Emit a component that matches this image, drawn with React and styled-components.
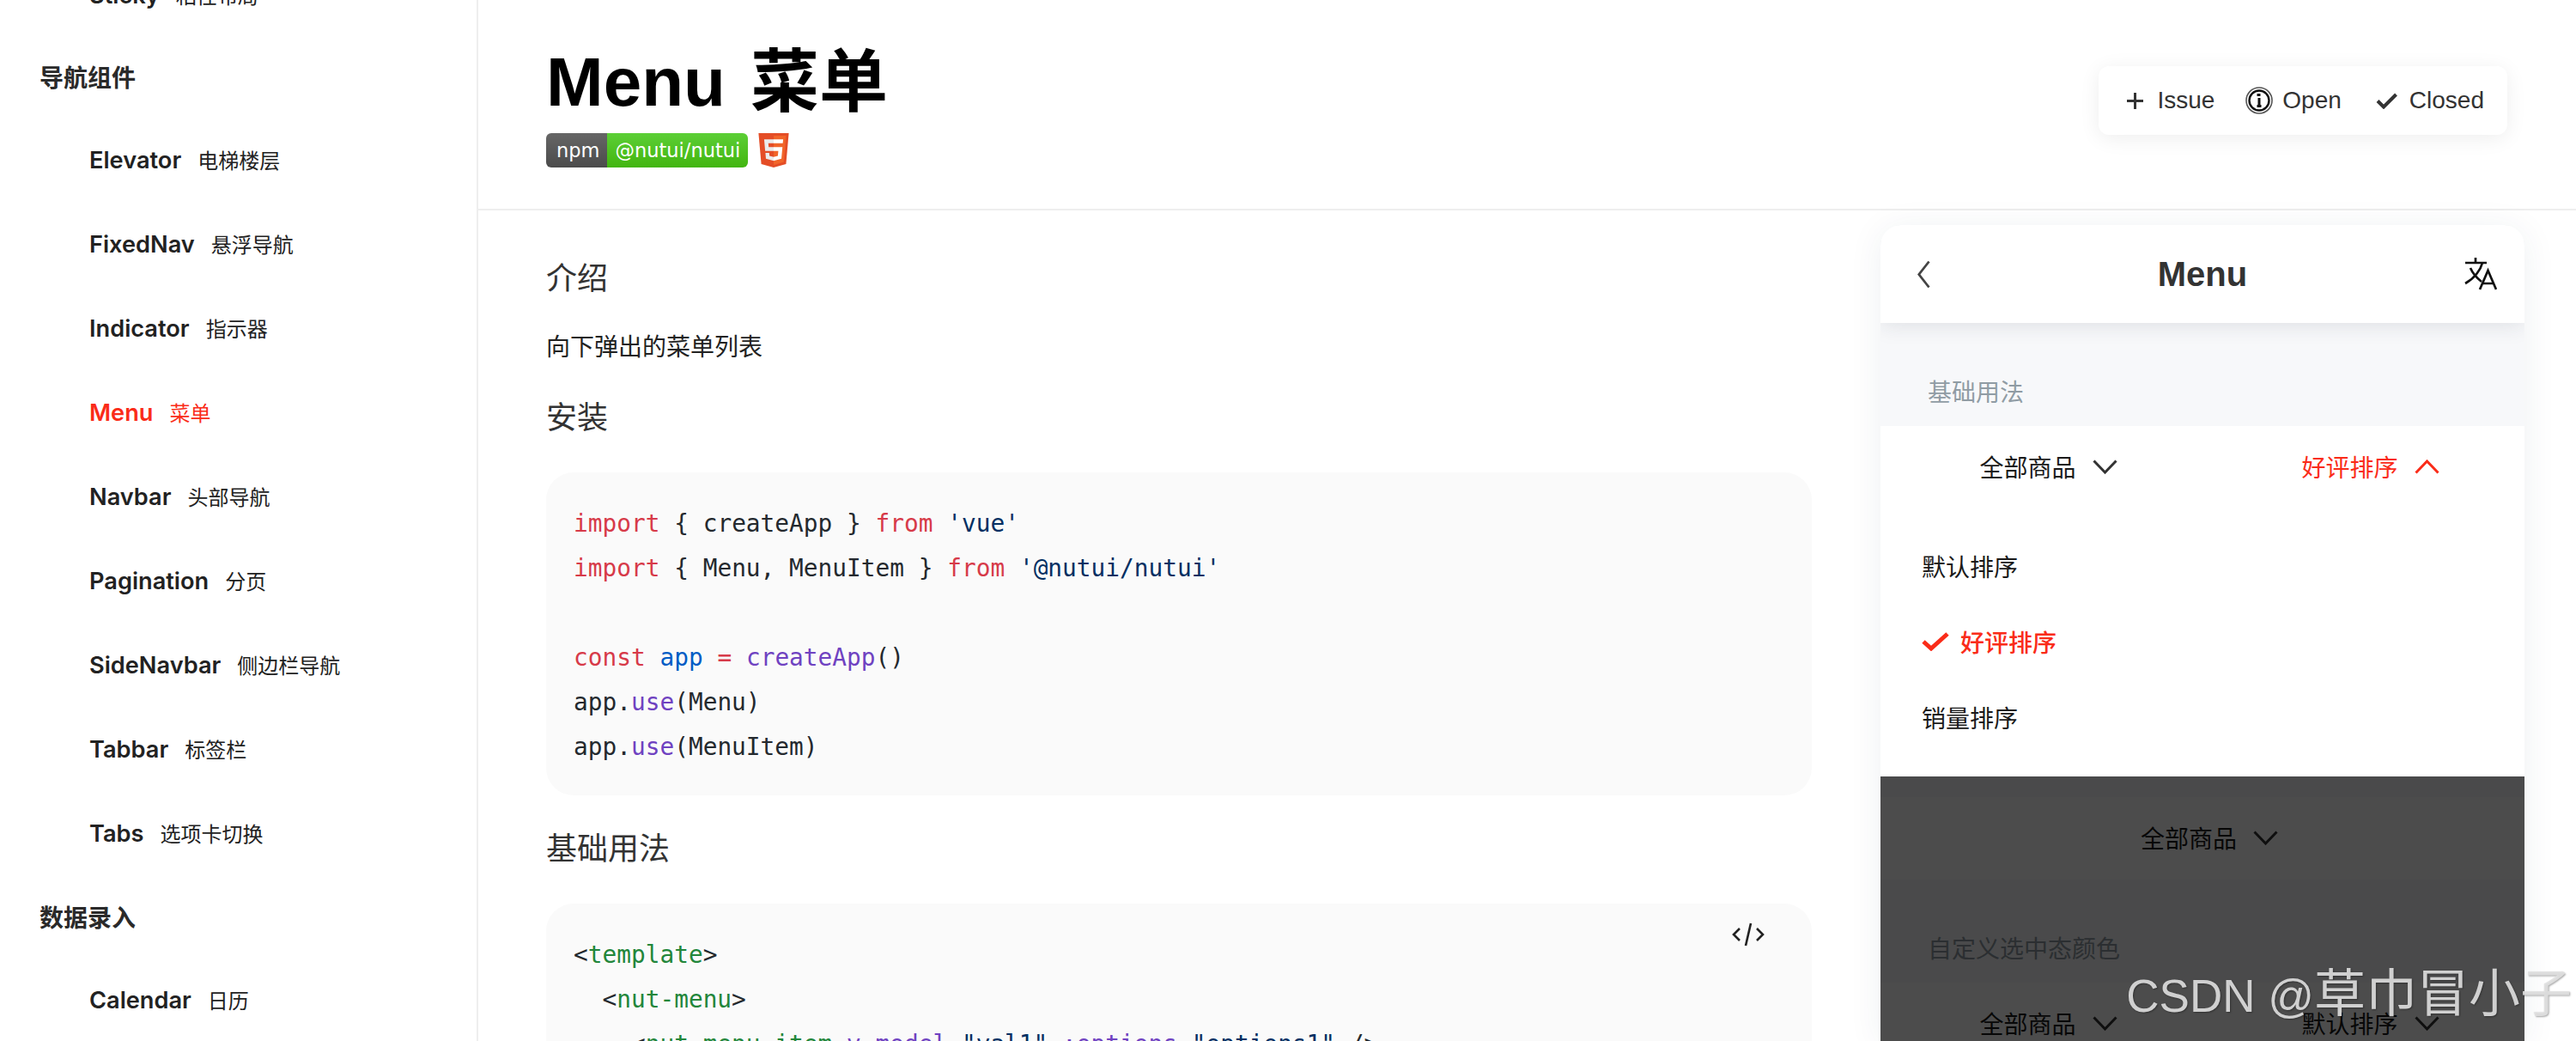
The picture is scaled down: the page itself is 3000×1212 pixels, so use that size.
import React from 'react';
import styled, { createGlobalStyle } from 'styled-components';

const cjk = '"Noto Sans CJK SC"';

const GlobalStyle = createGlobalStyle`
  html, body {
    margin: 0;
    padding: 0;
    height: 100%;
    overflow: hidden;
    background: #fff;
    font-family: "Liberation Sans", ${cjk}, sans-serif;
  }
`;

const Page = styled.div`
  position: relative;
  display: flex;
  width: 3000px;
  height: 1212px;
  overflow: hidden;
`;

// Sidebar
const Sidebar = styled.nav`
  flex: 0 0 555px;
  height: 100%;
  overflow: hidden;
  border-right: 2px solid #eee;
`;

const NavList = styled.div`
  display: flex;
  flex-direction: column;
  margin-top: -55px;
`;

const NavGroup = styled.div`
  flex-shrink: 0;
  height: ${props => (props.$tight ? 94 : 96)}px;
  line-height: ${props => (props.$tight ? 98 : 102)}px;
  padding-left: 46px;
  font-size: 28px;
  font-weight: 700;
  color: #2a2a2a;
`;

const NavItem = styled.div`
  flex-shrink: 0;
  display: flex;
  align-items: baseline;
  gap: 19px;
  height: 98px;
  line-height: 100px;
  padding-left: 104px;
  color: ${props => (props.$active ? '#fa2c19' : '#222')};
`;

const NavName = styled.span`
  font-family: Inter, ${cjk}, sans-serif;
  font-size: 27.2px;
  font-weight: 600;
`;

const NavCn = styled.span`
  font-size: 24px;
`;

// Main column
const Main = styled.main`
  flex: 1;
  min-width: 0;
  display: flex;
  flex-direction: column;
`;

const DocHeader = styled.header`
  flex: 0 0 243px;
  display: flex;
  justify-content: space-between;
  align-items: flex-start;
  padding: 0 80px 0 79px;
  border-bottom: 2px solid #eee;
`;

const TitleBlock = styled.div`
  display: flex;
  flex-direction: column;
  padding-top: 49px;
`;

const Title = styled.h1`
  margin: 0;
  font-size: 80px;
  line-height: 94px;
  font-weight: 700;
  word-spacing: 7px;
  color: #000;
`;

const Badges = styled.div`
  display: flex;
  align-items: center;
  gap: 12px;
  margin-top: 12px;
`;

const NpmBadge = styled.div`
  display: flex;
  height: 40px;
  border-radius: 6px;
  overflow: hidden;
  font-family: "DejaVu Sans", sans-serif;
  font-size: 22.5px;
  line-height: 40px;
  color: #fff;
`;

const BadgeLabel = styled.span`
  padding: 0 9px 0 12px;
  background: linear-gradient(#666, #4b4b4b);
`;

const BadgeValue = styled.span`
  padding: 0 9px;
  background: linear-gradient(#5ccf36, #42b50f);
`;

const IssueCard = styled.div`
  display: flex;
  align-items: center;
  margin-top: 77px;
  height: 80px;
  padding: 0 27px 0 33px;
  background: #fff;
  border-radius: 12px;
  box-shadow: 0 4px 24px rgba(0, 0, 0, 0.07);
  font-size: 28px;
  color: #333;
`;

const IssueItem = styled.div`
  display: flex;
  align-items: center;
  gap: ${props => props.$gap}px;
  margin-right: ${props => props.$after || 0}px;
`;

const Body = styled.div`
  flex: 1;
  min-height: 0;
  display: flex;
  gap: 80px;
  padding-left: 79px;
`;

const Article = styled.article`
  flex: 0 0 1474px;
  display: flex;
  flex-direction: column;
`;

const Heading = styled.h2`
  flex-shrink: 0;
  margin: ${props => props.$top}px 0 0;
  font-size: 36px;
  line-height: 50px;
  font-weight: 400;
  color: #333;
`;

const Paragraph = styled.p`
  flex-shrink: 0;
  margin: 35px 0 0;
  font-size: 28px;
  line-height: 40px;
  color: #222;
`;

const CodeBlock = styled.pre`
  position: relative;
  flex-shrink: 0;
  margin: ${props => props.$top}px 0 0;
  padding: 34px 32px 30px;
  border-radius: 32px;
  background: #fafafa;
  font-family: "DejaVu Sans Mono", monospace;
  font-size: 27.8px;
  line-height: 52px;
  color: #24292e;
  white-space: pre;
`;

const CodeLine = styled.div`
  height: 52px;
`;

const Kw = styled.span`color: #d73a49;`;
const Str = styled.span`color: #032f62;`;
const Var = styled.span`color: #005cc5;`;
const Fn = styled.span`color: #6f42c1;`;
const Tag = styled.span`color: #22863a;`;

const CodeToggle = styled.svg`
  position: absolute;
  top: 22px;
  right: 55px;
`;

// Phone preview
const Phone = styled.aside`
  flex: 0 0 750px;
  margin-top: 17px;
  display: flex;
  flex-direction: column;
  background: #f7f8fa;
  border-radius: 24px 24px 0 0;
  box-shadow: 0 4px 40px rgba(30, 50, 90, 0.07);
  overflow: hidden;

  > * {
    flex-shrink: 0;
  }
`;

const PhoneBar = styled.div`
  position: relative;
  z-index: 1;
  height: 114px;
  display: grid;
  grid-template-columns: 1fr auto 1fr;
  align-items: center;
  padding: 0 32px;
  background: #fff;
  box-shadow: 0 2px 24px rgba(30, 40, 60, 0.12);

  > svg:first-child {
    margin-left: 11px;
  }

  > svg:last-child {
    justify-self: end;
  }
`;

const PhoneTitle = styled.div`
  font-size: 40px;
  font-weight: 700;
  color: #333;
`;

const SectionTitle = styled.div`
  height: 120px;
  padding: 62px 0 0 55px;
  box-sizing: border-box;
  font-size: 28px;
  line-height: 40px;
  color: #909ca4;
`;

const MenuBar = styled.div`
  display: flex;
  height: 96px;
  background: #fff;
`;

const MenuToggle = styled.div`
  flex: 1;
  display: flex;
  align-items: center;
  justify-content: center;
  gap: 19px;
  padding: 0 0 2px 16px;
  font-size: 28px;
  color: ${props => (props.$active ? '#fa2c19' : '#1a1a1a')};
`;

const Popup = styled.div`
  display: flex;
  flex-direction: column;
  padding: 23px 0 25px;
  background: #fff;
`;

const PopupItem = styled.div`
  display: flex;
  align-items: center;
  gap: 13px;
  height: 88px;
  padding-left: 48px;
  font-size: 28px;
  color: ${props => (props.$active ? '#fa2c19' : '#1a1a1a')};
  font-weight: ${props => (props.$active ? 500 : 400)};
`;

const Dimmed = styled.div`
  position: relative;
  padding-top: 24px;
`;

const Mask = styled.div`
  position: absolute;
  inset: 0;
  background: rgba(0, 0, 0, 0.7);
`;

const Watermark = styled.div`
  position: absolute;
  right: 5px;
  top: 1120px;
  font-size: 53px;
  line-height: 76px;
  white-space: nowrap;
  color: rgba(225, 225, 225, 0.9);
  text-shadow: 1px 1px 2px rgba(0, 0, 0, 0.35);
`;

const WatermarkCn = styled.span`
  font-size: 60px;
`;

const navItems = [
  ['Elevator', '电梯楼层'],
  ['FixedNav', '悬浮导航'],
  ['Indicator', '指示器'],
  ['Menu', '菜单', true],
  ['Navbar', '头部导航'],
  ['Pagination', '分页'],
  ['SideNavbar', '侧边栏导航'],
  ['Tabbar', '标签栏'],
  ['Tabs', '选项卡切换'],
];

const Nav = ({ name, cn, active }) => (
  <NavItem $active={active}>
    <NavName>{name}</NavName>
    <NavCn>{cn}</NavCn>
  </NavItem>
);

const Chevron = ({ up, color = '#333' }) => (
  <svg width="29" height="17" viewBox="0 0 29 17" fill="none">
    <polyline
      points={up ? '1.5,15.5 14.5,2 27.5,15.5' : '1.5,1.5 14.5,15 27.5,1.5'}
      stroke={color}
      strokeWidth="3"
    />
  </svg>
);

const TranslateIcon = () => (
  <svg width="38" height="38" viewBox="0 0 38 38" fill="none" stroke="#111" strokeWidth="2.7">
    <path d="M1 6H26M13 0v6" />
    <path d="M21 6C19 14 12 24 1 30M7 12C10 19 15 24 20 28" />
    <path d="M18 37L27.5 15 37 37M21 30H34" />
  </svg>
);

const Html5Logo = () => (
  <svg width="36" height="40" viewBox="30 0 451 512">
    <polygon fill="#E44D26" points="71,460 30,0 481,0 440,460 255,512" />
    <polygon fill="#F16529" points="256,472 405,431 440,37 256,37" />
    <polygon fill="#EBEBEB" points="256,208 181,208 176,150 256,150 256,94 114,94 115,109 129,265 256,265" />
    <polygon fill="#EBEBEB" points="256,355 193,338 189,293 133,293 140,382 256,414" />
    <polygon fill="#FFF" points="255,208 255,265 325,265 318,338 255,355 255,414 371,382 372,372 385,223 387,208" />
    <polygon fill="#FFF" points="255,94 255,150 392,150 393,138 396,109 397,94" />
  </svg>
);

export default function App() {
  return (
    <Page>
      <GlobalStyle />
      <Sidebar>
        <NavList>
          <Nav name="Sticky" cn="粘性布局" />
          <NavGroup $tight>导航组件</NavGroup>
          {navItems.map(([name, cn, active]) => (
            <Nav key={name} name={name} cn={cn} active={active} />
          ))}
          <NavGroup>数据录入</NavGroup>
          <Nav name="Calendar" cn="日历" />
        </NavList>
      </Sidebar>

      <Main>
        <DocHeader>
          <TitleBlock>
            <Title>Menu 菜单</Title>
            <Badges>
              <NpmBadge>
                <BadgeLabel>npm</BadgeLabel>
                <BadgeValue>@nutui/nutui</BadgeValue>
              </NpmBadge>
              <Html5Logo />
            </Badges>
          </TitleBlock>
          <IssueCard>
            <IssueItem $gap={16} $after={36}>
              <svg width="19" height="19" viewBox="0 0 19 19">
                <path d="M9.5 0v19M0 9.5h19" stroke="#333" strokeWidth="3" />
              </svg>
              Issue
            </IssueItem>
            <IssueItem $gap={11} $after={40}>
              <svg width="32" height="32" viewBox="0 0 32 32" fill="none">
                <circle cx="16" cy="16" r="15" stroke="#555" strokeWidth="1.6" />
                <circle cx="16" cy="16" r="11.5" stroke="#111" strokeWidth="2.4" />
                <path d="M13.5 9.5h4M16 13v9M13.5 22.5h5" stroke="#111" strokeWidth="3" />
              </svg>
              Open
            </IssueItem>
            <IssueItem $gap={14}>
              <svg width="25" height="19" viewBox="0 0 25 19" fill="none">
                <path d="M2 9.5l7 7L23.5 2" stroke="#333" strokeWidth="4" />
              </svg>
              Closed
            </IssueItem>
          </IssueCard>
        </DocHeader>

        <Body>
          <Article>
            <Heading $top={55}>介绍</Heading>
            <Paragraph>向下弹出的菜单列表</Paragraph>
            <Heading $top={37}>安装</Heading>
            <CodeBlock $top={38}>
              <CodeLine><Kw>import</Kw> {'{'} createApp {'}'} <Kw>from</Kw> <Str>'vue'</Str></CodeLine>
              <CodeLine><Kw>import</Kw> {'{'} Menu, MenuItem {'}'} <Kw>from</Kw> <Str>'@nutui/nutui'</Str></CodeLine>
              <CodeLine />
              <CodeLine><Kw>const</Kw> <Var>app</Var> <Kw>=</Kw> <Fn>createApp</Fn>()</CodeLine>
              <CodeLine>app.<Fn>use</Fn>(Menu)</CodeLine>
              <CodeLine>app.<Fn>use</Fn>(MenuItem)</CodeLine>
            </CodeBlock>
            <Heading $top={38}>基础用法</Heading>
            <CodeBlock $top={38}>
              <CodeToggle width="38" height="28" viewBox="0 0 38 28" fill="none" stroke="#222" strokeWidth="2.6">
                <path d="M9 7L2 14l7 7M29 7l7 7-7 7M22 1l-6 26" />
              </CodeToggle>
              <CodeLine>&lt;<Tag>template</Tag>&gt;</CodeLine>
              <CodeLine>  &lt;<Tag>nut-menu</Tag>&gt;</CodeLine>
              <CodeLine>    &lt;<Tag>nut-menu-item</Tag> <Fn>v-model</Fn>=<Str>"val1"</Str> <Fn>:options</Fn>=<Str>"options1"</Str> /&gt;</CodeLine>
            </CodeBlock>
          </Article>

          <Phone>
            <PhoneBar>
              <svg width="15" height="33" viewBox="0 0 15 33" fill="none">
                <polyline points="13.5,1.5 1.8,16.5 13.5,31.5" stroke="#444" strokeWidth="2.8" />
              </svg>
              <PhoneTitle>Menu</PhoneTitle>
              <TranslateIcon />
            </PhoneBar>
            <SectionTitle>基础用法</SectionTitle>
            <MenuBar>
              <MenuToggle>全部商品<Chevron /></MenuToggle>
              <MenuToggle $active>好评排序<Chevron up color="#fa2c19" /></MenuToggle>
            </MenuBar>
            <Popup>
              <PopupItem>默认排序</PopupItem>
              <PopupItem $active>
                <svg width="32" height="22" viewBox="0 0 32 22" fill="none">
                  <path d="M2 11l9 8L30 2" stroke="#fa2c19" strokeWidth="5" />
                </svg>
                好评排序
              </PopupItem>
              <PopupItem>销量排序</PopupItem>
            </Popup>
            <Dimmed>
              <MenuBar>
                <MenuToggle>全部商品<Chevron /></MenuToggle>
              </MenuBar>
              <SectionTitle>自定义选中态颜色</SectionTitle>
              <MenuBar>
                <MenuToggle>全部商品<Chevron /></MenuToggle>
                <MenuToggle>默认排序<Chevron /></MenuToggle>
              </MenuBar>
              <Mask />
            </Dimmed>
          </Phone>
        </Body>
      </Main>

      <Watermark>CSDN @<WatermarkCn>草巾冒小子</WatermarkCn></Watermark>
    </Page>
  );
}
